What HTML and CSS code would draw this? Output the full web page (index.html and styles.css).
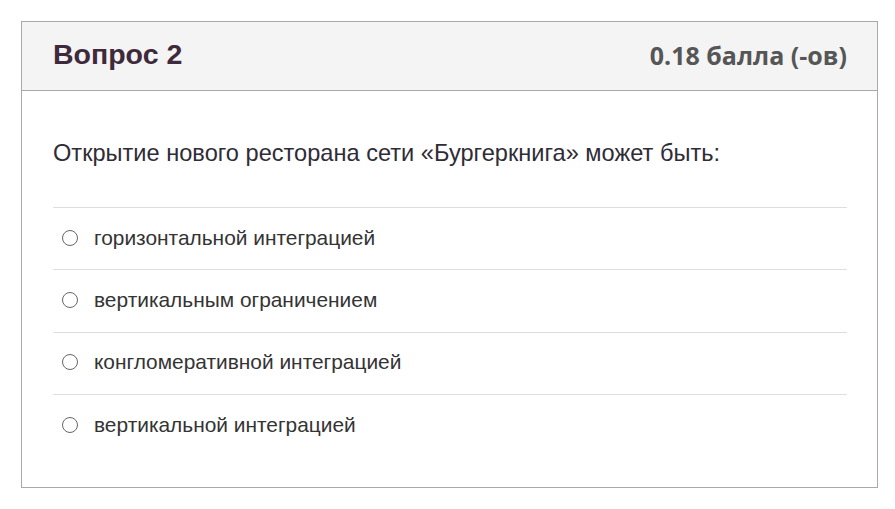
FILE: index.html
```html
<!DOCTYPE html>
<html lang="ru">
<head>
<meta charset="utf-8">
<link rel="stylesheet" href="styles.css">
</head>
<body>
<div class="card">
  <div class="card-header">
    <h2 class="title">Вопрос 2</h2>
    <div class="grade">0.18 балла (-ов)</div>
  </div>
  <div class="card-body">
    <p class="question">Открытие нового ресторана сети «Бургеркнига» может быть:</p>
    <div class="answers">
      <label class="answer"><span class="radio"></span><span>горизонтальной интеграцией</span></label>
      <label class="answer"><span class="radio"></span><span>вертикальным ограничением</span></label>
      <label class="answer"><span class="radio"></span><span>конгломеративной интеграцией</span></label>
      <label class="answer"><span class="radio"></span><span>вертикальной интеграцией</span></label>
    </div>
  </div>
</div>
</body>
</html>
```
FILE: styles.css
```css
html, body {
  margin: 0;
  padding: 0;
  background: #ffffff;
}
body {
  font-family: "Liberation Sans", Arial, sans-serif;
  color: #343434;
}
.card {
  margin: 21px 0 0 21px;
  width: 857px;
  height: 467px;
  border: 1px solid #a9a9a9;
  box-sizing: border-box;
  display: flex;
  flex-direction: column;
}
.card-header {
  height: 69px;
  box-sizing: border-box;
  background: #f4f4f4;
  border-bottom: 1px solid #a9a9a9;
  display: flex;
  align-items: center;
  justify-content: space-between;
  padding: 0 30px 3px 31px;
}
.title {
  margin: 0;
  font-size: 28.5px;
  font-weight: bold;
  color: #3e2a3a;
}
.grade {
  font-family: "Open Sans", sans-serif;
  font-weight: bold;
  font-size: 25px;
  color: #565656;
}
.card-body {
  padding: 0 30px 0 31px;
}
.question {
  margin: 0;
  padding: 47px 0 39px;
  font-size: 23.6px;
  line-height: 30px;
  color: #2f2c36;
}
.answers {
  display: flex;
  flex-direction: column;
}
.answer {
  display: flex;
  align-items: center;
  height: 62.3px;
  border-top: 1px solid #dedede;
  box-sizing: border-box;
  font-size: 20.9px;
  color: #343434;
  padding-left: 9px;
  padding-bottom: 2px;
}
.radio {
  width: 16px;
  height: 16px;
  box-sizing: border-box;
  border: 1.5px solid #666;
  border-radius: 50%;
  margin-right: 16px;
  flex: none;
}
```
